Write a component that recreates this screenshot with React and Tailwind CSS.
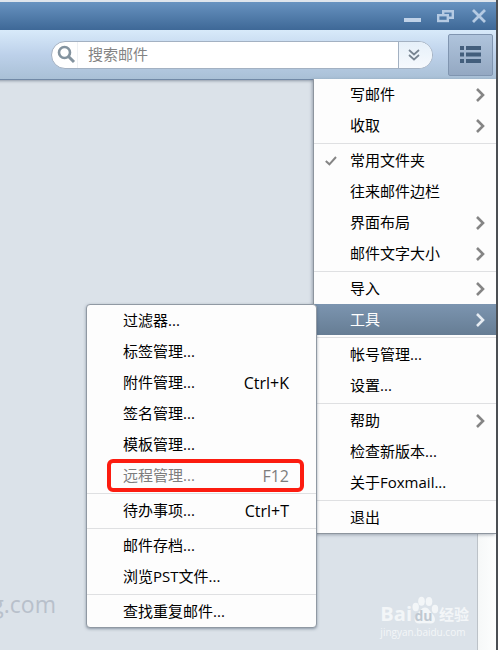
import React from "react";

function Chevron({ light }) {
  return (
    <svg width="12" height="14" viewBox="0 0 12 14" fill="none" aria-hidden="true" className="shrink-0">
      <path d="M3 1 L9 7 L3 13" stroke={light ? "#e6ecf2" : "#858585"} strokeWidth="2.6" />
    </svg>
  );
}

function Check() {
  return (
    <svg width="12" height="10" viewBox="0 0 12 10" fill="none" aria-hidden="true">
      <path d="M0.8 5 L4.4 8.3 L11 1" stroke="#858585" strokeWidth="2" />
    </svg>
  );
}

function Separator() {
  return (
    <li role="separator" className="flex h-1 items-center">
      <span className="h-px w-full bg-[#dfe0e2]" />
    </li>
  );
}

function MenuItem({ label, arrow, checked, active, children }) {
  return (
    <li role="none" className="relative">
      <button
        type="button"
        role="menuitem"
        className={
          "flex h-[31px] w-full items-center pr-2.5 text-left " +
          (active ? "bg-linear-to-b from-[#7c95b0] to-[#667d94] text-white" : "text-black")
        }
      >
        <span className="flex w-9 shrink-0 justify-center pr-0.5">{checked && <Check />}</span>
        <span className="flex-1 whitespace-nowrap">{label}</span>
        {arrow && <Chevron light={active} />}
      </button>
      {children}
    </li>
  );
}

function SubItem({ label, keys, disabled, marked }) {
  return (
    <li role="none" className="relative">
      <button
        type="button"
        role="menuitem"
        disabled={disabled}
        className={
          "flex h-[31px] w-full items-center justify-between pr-[27px] pl-9 whitespace-nowrap " +
          (disabled ? "text-[#7d7d7d]" : "text-black")
        }
      >
        <span>{label}</span>
        {keys && <span className="text-base leading-5">{keys}</span>}
      </button>
      {marked && (
        <span className="pointer-events-none absolute -top-px right-3 -bottom-px left-5 rounded-md border-4 border-[#fc1c10]" />
      )}
    </li>
  );
}

function ToolsMenu() {
  return (
    <ul
      role="menu"
      aria-label="工具"
      className="absolute top-0 right-full z-10 -mr-[3px] w-[231px] rounded-sm border border-[#9099a3] bg-[#fdfdfd] shadow-[0_1px_3px_rgba(60,75,95,0.5)]"
    >
      <SubItem label="过滤器..." />
      <SubItem label="标签管理..." />
      <SubItem label="附件管理..." keys="Ctrl+K" />
      <SubItem label="签名管理..." />
      <SubItem label="模板管理..." />
      <SubItem label="远程管理..." keys="F12" disabled marked />
      <Separator />
      <SubItem label="待办事项..." keys="Ctrl+T" />
      <Separator />
      <SubItem label="邮件存档..." />
      <SubItem label="浏览PST文件..." />
      <Separator />
      <SubItem label="查找重复邮件..." />
    </ul>
  );
}

function MainMenu() {
  return (
    <ul
      role="menu"
      aria-label="主菜单"
      className="absolute top-full right-0 z-10 w-[183px] border-b border-l border-[#8d959e] bg-[#fdfdfd] shadow-[-1px_1px_3px_rgba(60,75,95,0.4)]"
    >
      <MenuItem label="写邮件" arrow />
      <MenuItem label="收取" arrow />
      <Separator />
      <MenuItem label="常用文件夹" checked />
      <MenuItem label="往来邮件边栏" />
      <MenuItem label="界面布局" arrow />
      <MenuItem label="邮件文字大小" arrow />
      <Separator />
      <MenuItem label="导入" arrow />
      <MenuItem label="工具" arrow active>
        <ToolsMenu />
      </MenuItem>
      <Separator />
      <MenuItem label="帐号管理..." />
      <MenuItem label="设置..." />
      <Separator />
      <MenuItem label="帮助" arrow />
      <MenuItem label="检查新版本..." />
      <MenuItem label="关于Foxmail..." />
      <Separator />
      <MenuItem label="退出" />
    </ul>
  );
}

function TitleBar() {
  return (
    <header className="flex h-[30px] items-center justify-end gap-4 border-t-2 border-[#dfe5ec] bg-linear-to-b from-[#6893c0] to-[#3e6897] pr-2.5">
      <button type="button" aria-label="最小化">
        <svg width="17" height="14" viewBox="0 0 17 14" className="block">
          <rect x="0" y="9" width="17" height="4" fill="#c0d2e8" />
        </svg>
      </button>
      <button type="button" aria-label="还原">
        <svg width="17" height="14" viewBox="0 0 17 14" fill="none" stroke="#b5cae3" strokeWidth="2.4" className="block">
          <path d="M6.200 5 V2.200 H15.800 V8.800 H11" />
          <rect x="1.200" y="6.200" width="9.600" height="5.800" />
        </svg>
      </button>
      <button type="button" aria-label="关闭" className="ml-0.5">
        <svg width="14" height="14" viewBox="0 0 14 14" stroke="#b5cae3" strokeWidth="2.8" className="block">
          <path d="M1 1 L13 13 M13 1 L1 13" />
        </svg>
      </button>
    </header>
  );
}

function Toolbar() {
  return (
    <div className="relative flex h-[50px] items-center border-b border-[#7189a6] bg-linear-to-b from-[#d8eafa] via-[#bdd1ea] to-[#a9c0d6] pr-[3px] pl-[51px]">
      <form className="flex h-7 min-w-0 flex-1 overflow-hidden rounded-full border border-[#a3b1c2] bg-white">
        <label htmlFor="mail-search" className="flex w-[26px] shrink-0 items-center justify-end border-r border-[#eef1f4] pr-px">
          <svg width="19" height="19" viewBox="0 0 19 19" fill="none" stroke="#83939f" aria-hidden="true">
            <circle cx="7.5" cy="7.5" r="5.5" strokeWidth="2.6" />
            <path d="M11.5 11.5 L17 17" strokeWidth="3" />
          </svg>
        </label>
        <input
          id="mail-search"
          type="text"
          aria-label="搜索邮件"
          placeholder="搜索邮件"
          className="min-w-0 flex-1 pl-2.5 placeholder:text-[#838383] focus:outline-none"
        />
        <button
          type="button"
          aria-label="搜索选项"
          className="flex w-[34px] shrink-0 items-center justify-center border-l border-[#a3b1c2] bg-linear-to-b from-[#e6f0f9] to-[#f6f9fd] pr-1"
        >
          <svg width="12" height="12" viewBox="0 0 12 12" fill="none" stroke="#788491" strokeWidth="1.7">
            <path d="M1 1 L6 5.5 L11 1 M1 6 L6 10.5 L11 6" />
          </svg>
        </button>
      </form>
      <button
        type="button"
        aria-label="主菜单"
        className="ml-[15px] flex h-[42px] w-[45px] shrink-0 items-center justify-center rounded-xs border border-[#8095b0] bg-linear-to-b from-[#afc4dc] to-[#94a8c2]"
      >
        <svg width="21" height="17" viewBox="0 0 21 17" fill="#435e7c">
          <rect x="0" y="0" width="4" height="4" />
          <rect x="6" y="0" width="15" height="4" />
          <rect x="0" y="6.5" width="4" height="4" />
          <rect x="6" y="6.5" width="15" height="4" />
          <rect x="0" y="13" width="4" height="4" />
          <rect x="6" y="13" width="15" height="4" />
        </svg>
      </button>
      <MainMenu />
    </div>
  );
}

function BaiduMark() {
  return (
    <div className="flex flex-col items-start text-[#f3f6f8]">
      <div className="flex h-7 items-end font-bold">
        <span className="text-xl leading-5">Bai</span>
        <span className="relative h-7 w-[27px]">
          <svg width="27" height="28" viewBox="0 0 27 28" fill="currentColor" aria-hidden="true">
            <ellipse cx="3.7" cy="11" rx="3.2" ry="4.2" />
            <ellipse cx="9.5" cy="5.2" rx="3.3" ry="4.5" />
            <ellipse cx="17" cy="5.5" rx="3.3" ry="4.5" />
            <ellipse cx="23" cy="13" rx="3.2" ry="4.2" />
            <path d="M13 11.5 C16.500 11.500 17.500 15 20 17.500 C24 21 24.500 27.500 18.500 27.500 C15 27.500 11.500 27 8 27.500 C1.500 28 1 21 5.500 17.500 C8.500 15 9.500 11.500 13 11.500 Z" />
          </svg>
          <span className="absolute inset-x-0 bottom-0 pr-1 text-center text-sm leading-4 text-[#bfc8d1]">du</span>
        </span>
        <span className="text-[15px] leading-5">经验</span>
      </div>
      <span className="text-[10px] leading-4">jingyan.baidu.com</span>
    </div>
  );
}

export default function App() {
  return (
    <div className="flex h-screen flex-col overflow-hidden border-r-2 border-[#4b4f54] bg-[#dbe2e9] font-['Open_Sans','Noto_Sans_CJK_SC',sans-serif] text-[15px]">
      <TitleBar />
      <Toolbar />
      <main className="flex min-h-0 flex-1 shadow-[inset_0_4px_3px_-3px_rgba(90,105,125,0.6)]">
        <div className="flex flex-1 items-end justify-between overflow-hidden pr-2 pb-2.5">
          <div className="flex w-14 justify-end pb-5 text-[23px] leading-8 text-[#b8c0cb]">
            <span>g.com</span>
          </div>
          <BaiduMark />
        </div>
        <div className="w-[19px] border-l border-[#bcc2c8] bg-linear-to-r from-[#f6f8f8] to-[#fdfefe]" />
      </main>
    </div>
  );
}
